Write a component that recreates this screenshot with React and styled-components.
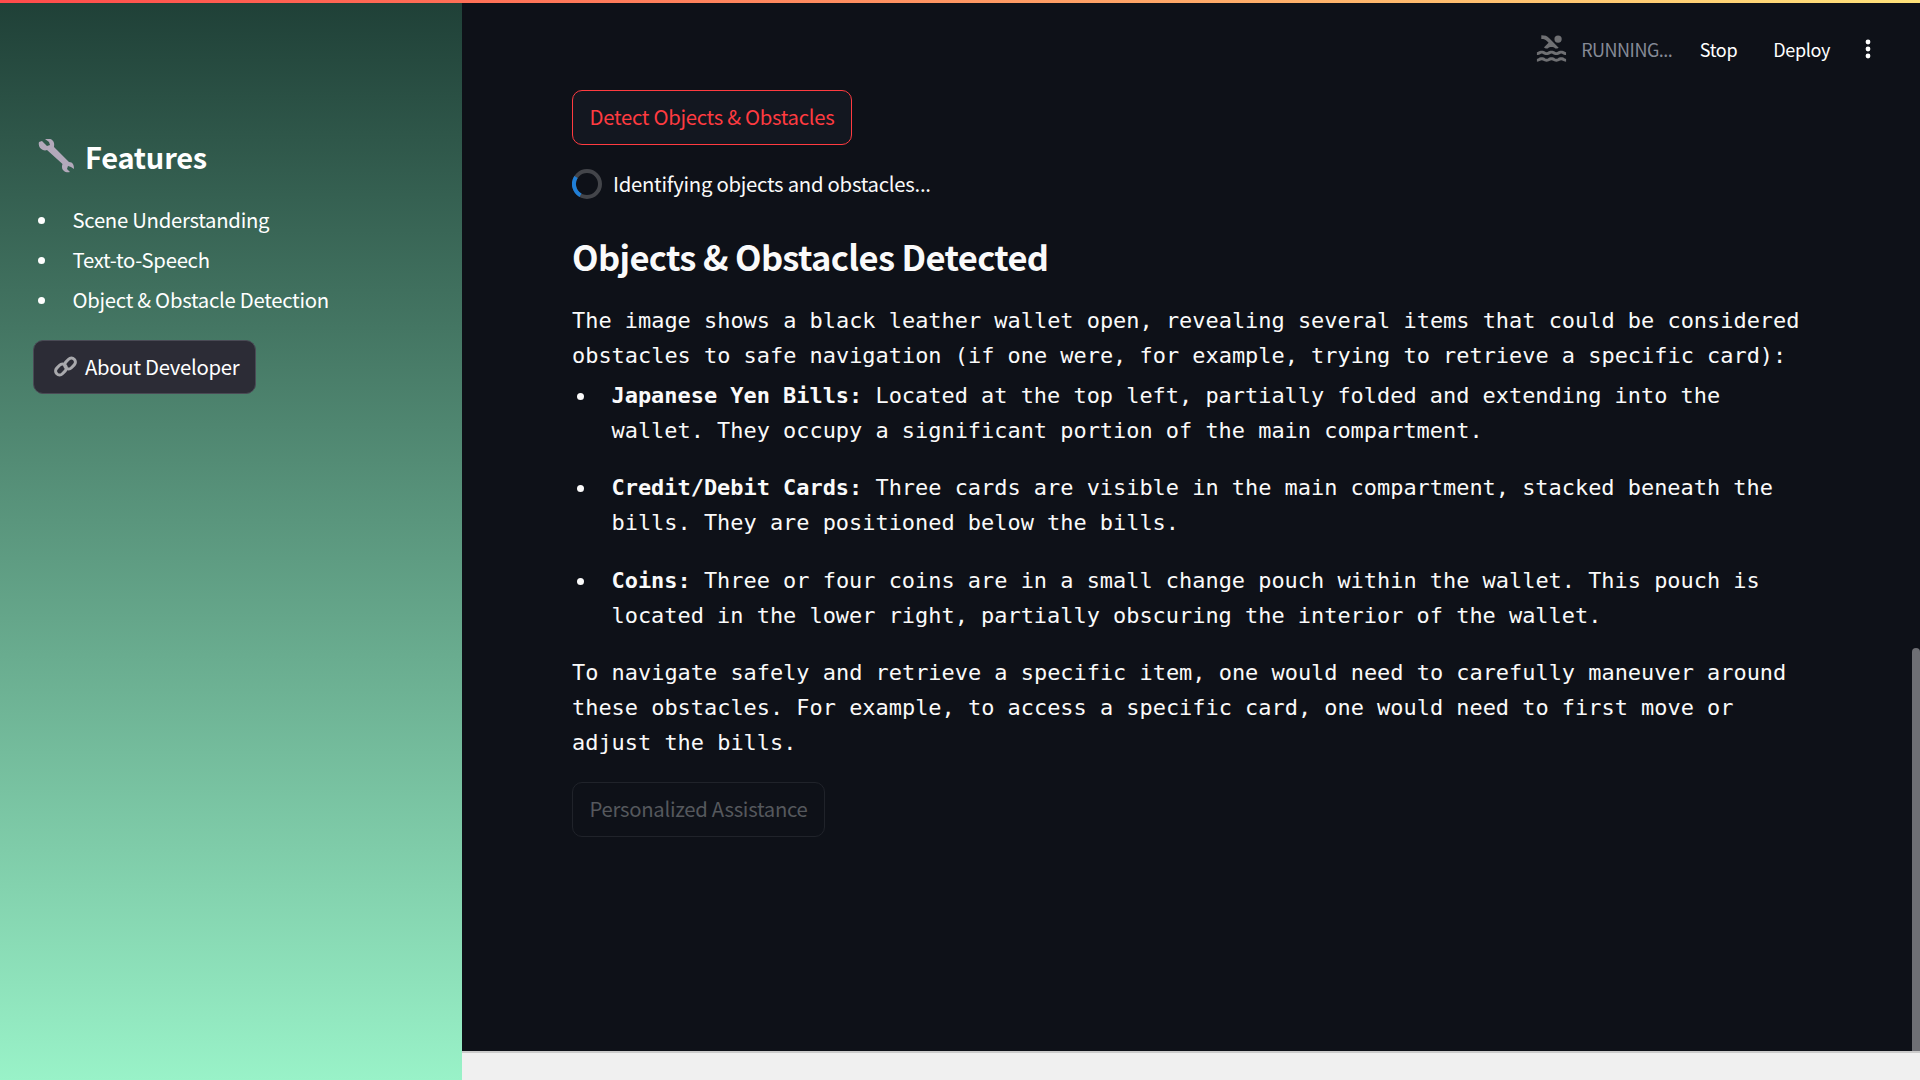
import React from "react";
import styled, { createGlobalStyle } from "styled-components";
import { MdPool } from "react-icons/md";

const Global = createGlobalStyle`
  html, body { margin: 0; padding: 0; height: 100%; overflow: hidden; background: #f0f0f0; }
  #root { height: 100%; }
  * { box-sizing: border-box; }
`;

const SANS = `"Noto Sans CJK SC", "Noto Sans", sans-serif`;
const MONO = `"DejaVu Sans Mono", "Liberation Mono", monospace`;

const Page = styled.div`
  position: relative;
  display: flex;
  width: 1920px;
  height: 1080px;
  font-family: ${SANS};
  overflow: hidden;
`;
const TopStripe = styled.div`
  position: absolute;
  top: 0;
  left: 0;
  right: 0;
  height: 3px;
  background: linear-gradient(90deg, #ff4b4b, #ffe27a);
  z-index: 3;
`;
const Sidebar = styled.aside`
  width: 462px;
  flex: none;
  padding: 133px 32px 0 33px;
  background: linear-gradient(180deg, #1f4037, #99f2c8);
  color: #fff;
`;
const SideTitle = styled.h2`
  display: flex;
  align-items: center;
  gap: 11px;
  margin: -1px 0 20px 5px;
  font-size: 29px;
  font-weight: 600;
  letter-spacing: -0.2px;
  line-height: 48px;
  svg {
    margin-top: 2px;
  }
`;
const FeatureList = styled.ul`
  list-style: none;
  margin: 0 0 20px;
  padding: 0;
`;
const FeatureItem = styled.li`
  position: relative;
  padding-left: 39.5px;
  height: 40px;
  font-size: 20.3px;
  letter-spacing: -0.27px;
  line-height: 39px;
  &::before {
    content: "";
    position: absolute;
    left: 5px;
    top: 17px;
    width: 7px;
    height: 7px;
    border-radius: 50%;
    background: #fff;
  }
`;
const DevButton = styled.button`
  display: flex;
  align-items: center;
  gap: 8px;
  width: 223px;
  height: 54px;
  padding: 0 0 2px 20px;
  border: 1px solid #4a4a55;
  border-radius: 10px;
  background: #2c2c36;
  color: #fff;
  font: 400 20.3px ${SANS};
  letter-spacing: -0.27px;
`;
const Main = styled.main`
  position: relative;
  flex: 1;
  height: 1053px;
  background: #0e1118;
  border-bottom: 2px solid #cbcbcb;
  color: #fafafa;
`;
const Header = styled.header`
  display: flex;
  align-items: center;
  justify-content: flex-end;
  height: 97px;
  padding: 0 49px 0 0;
  position: absolute;
  top: 0;
  left: 0;
  right: 0;
  color: #6f7073;
`;
const Running = styled.span`
  margin: 0 27.5px 0 12px;
  color: #858a96;
  font-size: 18px;
  letter-spacing: -0.5px;
`;
const HeadLink = styled.span`
  font-size: 18px;
  letter-spacing: -0.35px;
  color: #fff;
  margin-right: ${(p) => p.$gap}px;
`;
const Scrollbar = styled.div`
  position: absolute;
  top: 648px;
  right: 0;
  bottom: 0;
  width: 8px;
  border-radius: 4px 4px 0 0;
  background: #6e6f74;
`;
const Content = styled.div`
  padding: 90px 118px 0 110px;
`;
const ActionButton = styled.button`
  display: block;
  height: 55px;
  padding: 0 16.5px 3px;
  border-radius: 10px;
  font: 400 20.3px ${SANS};
  letter-spacing: -0.28px;
  background: ${(p) => (p.$disabled ? "transparent" : "#131720")};
  color: ${(p) => (p.$disabled ? "#55585d" : "#ff3b40")};
  border: 1px solid ${(p) => (p.$disabled ? "#20232a" : "#ff3b40")};
`;
const SpinnerRow = styled.div`
  display: flex;
  align-items: center;
  gap: 11px;
  height: 40px;
  margin-top: 19px;
  font-size: 20.3px;
  letter-spacing: -0.25px;
`;
const SpinnerText = styled.span`
  margin-top: -2px;
`;
const Heading = styled.h2`
  margin: 22px 0 17px;
  font-size: 34.5px;
  font-weight: 600;
  letter-spacing: -0.65px;
  line-height: 60px;
`;
const Para = styled.p`
  margin: 0 0 ${(p) => p.$after || 0}px;
  font-family: ${MONO};
  font-size: 21.93px;
  line-height: 35px;
  white-space: pre;
`;
const BulletList = styled.ul`
  list-style: none;
  margin: 0 0 18px;
  padding: 0;
`;
const Bullet = styled.li`
  position: relative;
  padding-left: 39.5px;
  margin-bottom: 22.3px;
  font-family: ${MONO};
  font-size: 21.93px;
  line-height: 35px;
  white-space: pre;
  &::before {
    content: "";
    position: absolute;
    left: 5px;
    top: 15px;
    width: 7px;
    height: 7px;
    border-radius: 50%;
    background: #fafafa;
  }
`;

const Wrench = () => (
  <svg width="36" height="36" viewBox="0 0 36 36">
    <path
      fill="#b3a9bb"
      d="M1 3l3-1 5 5 3-1-1-3-4-3c4-1 8 0 9 4 .4 2 0 3 0 4l15 15c4 0 5 3 5 7l-3-2-3-1-1 3 3 3c-4 1-8-1-8-5 0-1 0-2 .5-3L9 11c-1 .5-3 .5-4 0C2 10 0 7 1 3z"
    />
  </svg>
);
const LinkIcon = () => (
  <svg width="23" height="23" viewBox="0 0 23 23" fill="none" stroke="#a9a9ad" strokeWidth="3">
    <rect x="1" y="10.5" width="12" height="8" rx="4" transform="rotate(-45 7 14.5)" />
    <rect x="10" y="4.5" width="12" height="8" rx="4" transform="rotate(-45 16 8.5)" />
  </svg>
);
const Kebab = () => (
  <svg width="6" height="20" viewBox="0 0 6 20" fill="#fff">
    <circle cx="3" cy="3" r="2.4" />
    <circle cx="3" cy="10" r="2.4" />
    <circle cx="3" cy="17" r="2.4" />
  </svg>
);
const Spinner = () => (
  <svg width="30" height="30" viewBox="0 0 30 30" fill="none" strokeWidth="4">
    <circle cx="15" cy="15" r="13" stroke="#43454a" />
    <path d="M8.5 26.3A13 13 0 0 1 4 8" stroke="#1f7fd8" />
  </svg>
);

export default function App() {
  return (
    <Page>
      <Global />
      <TopStripe />
      <Sidebar>
        <SideTitle>
          <Wrench />
          Features
        </SideTitle>
        <FeatureList>
          <FeatureItem>Scene Understanding</FeatureItem>
          <FeatureItem>Text-to-Speech</FeatureItem>
          <FeatureItem>Object &amp; Obstacle Detection</FeatureItem>
        </FeatureList>
        <DevButton>
          <LinkIcon />
          About Developer
        </DevButton>
      </Sidebar>
      <Main>
        <Header>
          <MdPool size={35} />
          <Running>RUNNING...</Running>
          <HeadLink $gap={36}>Stop</HeadLink>
          <HeadLink $gap={35}>Deploy</HeadLink>
          <Kebab />
        </Header>
        <Scrollbar />
        <Content>
          <ActionButton>Detect Objects &amp; Obstacles</ActionButton>
          <SpinnerRow>
            <Spinner />
            <SpinnerText>Identifying objects and obstacles...</SpinnerText>
          </SpinnerRow>
          <Heading>Objects &amp; Obstacles Detected</Heading>
          <Para $after={5}>
            {"The image shows a black leather wallet open, revealing several items that could be considered\nobstacles to safe navigation (if one were, for example, trying to retrieve a specific card):"}
          </Para>
          <BulletList>
            <Bullet>
              <b>Japanese Yen Bills:</b>
              {" Located at the top left, partially folded and extending into the\nwallet. They occupy a significant portion of the main compartment."}
            </Bullet>
            <Bullet>
              <b>Credit/Debit Cards:</b>
              {" Three cards are visible in the main compartment, stacked beneath the\nbills. They are positioned below the bills."}
            </Bullet>
            <Bullet>
              <b>Coins:</b>
              {" Three or four coins are in a small change pouch within the wallet. This pouch is\nlocated in the lower right, partially obscuring the interior of the wallet."}
            </Bullet>
          </BulletList>
          <Para $after={22}>
            {"To navigate safely and retrieve a specific item, one would need to carefully maneuver around\nthese obstacles. For example, to access a specific card, one would need to first move or\nadjust the bills."}
          </Para>
          <ActionButton $disabled>Personalized Assistance</ActionButton>
        </Content>
      </Main>
    </Page>
  );
}
